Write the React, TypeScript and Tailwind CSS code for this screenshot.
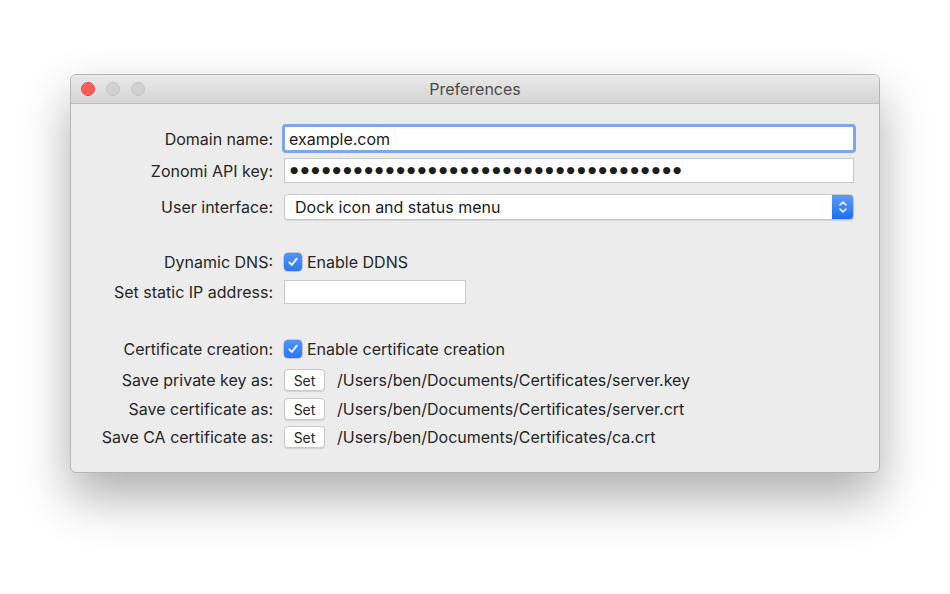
import React from "react";

const font = { fontFamily: 'Inter, "Liberation Sans", Arial, sans-serif' };

const Label = ({ children }: { children: React.ReactNode }) => (
  <div className="w-[213px] shrink-0 pr-[11px] text-right text-[16px] text-[#262626]">{children}</div>
);

const Checkbox = () => (
  <div className="flex h-[18px] w-[18px] items-center justify-center rounded-[4px] bg-gradient-to-b from-[#4f95f7] to-[#2a79f4] shadow-[0_0_0_0.5px_rgba(0,60,180,0.4)]">
    <svg width="12" height="12" viewBox="0 0 12 12" fill="none">
      <path d="M2.3 6.4 L4.8 9 L9.8 2.6" stroke="white" strokeWidth="1.8" strokeLinecap="round" strokeLinejoin="round" />
    </svg>
  </div>
);

const SetButton = () => (
  <div className="flex h-[22px] w-[41px] items-center justify-center rounded-[4px] border border-[#c9c9c9] bg-white text-[14px] text-[#262626] shadow-[0_1px_1px_rgba(0,0,0,0.12)]">
    Set
  </div>
);

export default function App() {
  const dots = "●".repeat(37);
  return (
    <div className="h-[594px] w-[950px] bg-white pt-[74px] pl-[70px]" style={font}>
      <div className="w-[810px] overflow-hidden rounded-[6px] border border-[#b5b5b5] bg-[#ececec] shadow-[0_24px_50px_rgba(0,0,0,0.32)]">
        {/* Title bar */}
        <div className="relative flex h-[29px] items-center border-b border-[#bdbdbd] bg-gradient-to-b from-[#e9e9e9] to-[#d4d4d4]">
          <div className="absolute left-[10px] top-[7px] flex gap-[11px]">
            <div className="h-[14px] w-[14px] rounded-full border border-[#e1463f] bg-[#fd5e57]" />
            <div className="h-[14px] w-[14px] rounded-full border border-[#c4c4c4] bg-[#d1d1d1]" />
            <div className="h-[14px] w-[14px] rounded-full border border-[#c4c4c4] bg-[#d1d1d1]" />
          </div>
          <div className="w-full text-center text-[16px] text-[#4a4a4a]">Preferences</div>
        </div>

        {/* Body */}
        <div className="flex flex-col pt-[20px] pb-[24px]">
          <div className="flex h-[29px] items-center">
            <Label>Domain name:</Label>
            <div className="ml-[-2px] flex h-[29px] w-[574px] items-center rounded-[4px] border-[3px] border-[#7da6ec] bg-white pl-[4px] text-[16px] text-[#1a1a1a]">
              example.com
            </div>
          </div>

          <div className="mt-[5px] flex h-[25px] items-center">
            <Label>Zonomi API key:</Label>
            <div className="flex h-[25px] w-[570px] items-center border border-[#c7c7c7] bg-white pl-[5px] text-[9.5px] tracking-[2.35px] text-[#1e1e1e]" style={{ fontFamily: '"DejaVu Sans", sans-serif' }}>
              {dots}
            </div>
          </div>

          <div className="mt-[11px] flex h-[26px] items-center">
            <Label>User interface:</Label>
            <div className="flex h-[26px] w-[570px] items-center overflow-hidden rounded-[4px] border border-[#c9c9c9] bg-white shadow-[0_1px_1px_rgba(0,0,0,0.1)]">
              <div className="flex-1 pl-[10px] text-[16px] text-[#1a1a1a]">Dock icon and status menu</div>
              <div className="flex h-full w-[21px] items-center justify-center bg-gradient-to-b from-[#5c9cf8] to-[#176ef2]">
                <svg width="10" height="16" viewBox="0 0 10 16" fill="none">
                  <path d="M2 6 L5 3 L8 6" stroke="white" strokeWidth="1.5" strokeLinecap="round" strokeLinejoin="round" />
                  <path d="M2 10 L5 13 L8 10" stroke="white" strokeWidth="1.5" strokeLinecap="round" strokeLinejoin="round" />
                </svg>
              </div>
            </div>
          </div>

          <div className="mt-[32px] flex h-[20px] items-center">
            <Label>Dynamic DNS:</Label>
            <Checkbox />
            <div className="ml-[5px] text-[16px] text-[#262626]">Enable DDNS</div>
          </div>

          <div className="mt-[8px] flex h-[24px] items-center">
            <Label>Set static IP address:</Label>
            <div className="h-[24px] w-[182px] border border-[#c7c7c7] bg-white" />
          </div>

          <div className="mt-[35px] flex h-[20px] items-center">
            <Label>Certificate creation:</Label>
            <Checkbox />
            <div className="ml-[5px] text-[16px] text-[#262626]">Enable certificate creation</div>
          </div>

          <div className="mt-[10px] flex h-[22px] items-center">
            <Label>Save private key as:</Label>
            <SetButton />
            <div className="ml-[12px] text-[16px] text-[#262626]">/Users/ben/Documents/Certificates/server.key</div>
          </div>

          <div className="mt-[7px] flex h-[22px] items-center">
            <Label>Save certificate as:</Label>
            <SetButton />
            <div className="ml-[12px] text-[16px] text-[#262626]">/Users/ben/Documents/Certificates/server.crt</div>
          </div>

          <div className="mt-[6px] flex h-[22px] items-center">
            <Label>Save CA certificate as:</Label>
            <SetButton />
            <div className="ml-[12px] text-[16px] text-[#262626]">/Users/ben/Documents/Certificates/ca.crt</div>
          </div>
        </div>
      </div>
    </div>
  );
}
